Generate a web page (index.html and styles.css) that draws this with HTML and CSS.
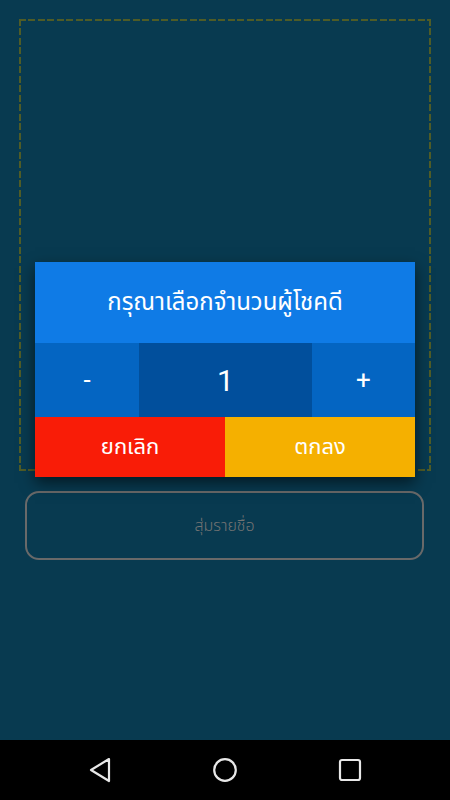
FILE: index.html
```html
<!DOCTYPE html>
<html lang="th">
<head>
<meta charset="utf-8">
<title>สุ่มรายชื่อ</title>
<link rel="stylesheet" href="styles.css">
</head>
<body>
<div class="screen">
  <main class="content">
    <div class="canvas"></div>
    <button class="random-btn">สุ่มรายชื่อ</button>
    <div class="dialog">
      <div class="dialog-title">กรุณาเลือกจำนวนผู้โชคดี</div>
      <div class="stepper">
        <div class="step minus">-</div>
        <div class="step value">1</div>
        <div class="step plus">+</div>
      </div>
      <div class="actions">
        <div class="action cancel">ยกเลิก</div>
        <div class="action ok">ตกลง</div>
      </div>
    </div>
  </main>
  <nav class="navbar">
    <svg class="nav-icon" width="24" height="26" viewBox="0 0 24 26"><path d="M21 2 L3 13 L21 24 Z" fill="none" stroke="#e8e8e8" stroke-width="2.2" stroke-linejoin="round"/></svg>
    <svg class="nav-icon" width="26" height="26" viewBox="0 0 26 26"><circle cx="13" cy="13" r="10.8" fill="none" stroke="#e8e8e8" stroke-width="2.2"/></svg>
    <svg class="nav-icon" width="24" height="24" viewBox="0 0 24 24"><rect x="2" y="2" width="20" height="20" rx="2" fill="none" stroke="#e8e8e8" stroke-width="2.2"/></svg>
  </nav>
</div>
</body>
</html>
```
FILE: styles.css
```css
html, body {
  margin: 0;
  padding: 0;
}
body {
  background: #083a50;
  font-family: "Noto Sans", "Noto Sans Thai", "Roboto", sans-serif;
}
.screen {
  width: 450px;
  height: 800px;
  display: flex;
  flex-direction: column;
}
.content {
  position: relative;
  flex: 1;
  display: flex;
  flex-direction: column;
  padding: 19px 19px 0 19px;
}
.canvas {
  width: 412px;
  height: 452px;
  box-sizing: border-box;
  background:
    repeating-linear-gradient(90deg, #4f5c27 0 7px, transparent 7px 9.5px) left top / 100% 2px no-repeat,
    repeating-linear-gradient(90deg, #4f5c27 0 7px, transparent 7px 9.5px) left bottom / 100% 2px no-repeat,
    repeating-linear-gradient(180deg, #4f5c27 0 7px, transparent 7px 9.5px) left top / 2px 100% no-repeat,
    repeating-linear-gradient(180deg, #4f5c27 0 7px, transparent 7px 9.5px) right top / 2px 100% no-repeat;
}
.random-btn {
  margin: 20px 0 0 6px;
  width: 399px;
  height: 69px;
  box-sizing: border-box;
  border: 2px solid #696969;
  border-radius: 14px;
  background: transparent;
  color: #737373;
  font-family: "Noto Sans", "Noto Sans Thai", sans-serif;
  font-size: 16px;
  font-weight: 300;
  padding: 0;
}
.dialog {
  position: absolute;
  left: 35px;
  top: 262px;
  width: 380px;
  display: flex;
  flex-direction: column;
  box-shadow: 0 6px 14px rgba(0, 0, 0, 0.55);
  color: #ffffff;
}
.dialog-title {
  height: 81px;
  background: #0f7be6;
  display: flex;
  align-items: center;
  justify-content: center;
  font-size: 24px;
}
.stepper {
  display: grid;
  grid-template-columns: 104px 173px 103px;
  height: 74px;
}
.step {
  display: flex;
  align-items: center;
  justify-content: center;
  background: #0465c2;
  font-family: "Roboto", sans-serif;
  font-size: 26px;
}
.step.value {
  background: #014f9c;
  font-size: 30px;
}
.actions {
  display: grid;
  grid-template-columns: 190px 190px;
  height: 60px;
}
.action {
  display: flex;
  align-items: center;
  justify-content: center;
  font-size: 22px;
}
.cancel {
  background: #f91c07;
}
.ok {
  background: #f5b000;
}
.navbar {
  height: 60px;
  background: #000000;
  display: flex;
  align-items: center;
  justify-content: space-between;
  padding: 0 88px 0 88px;
}
.nav-icon {
  display: block;
}
```
